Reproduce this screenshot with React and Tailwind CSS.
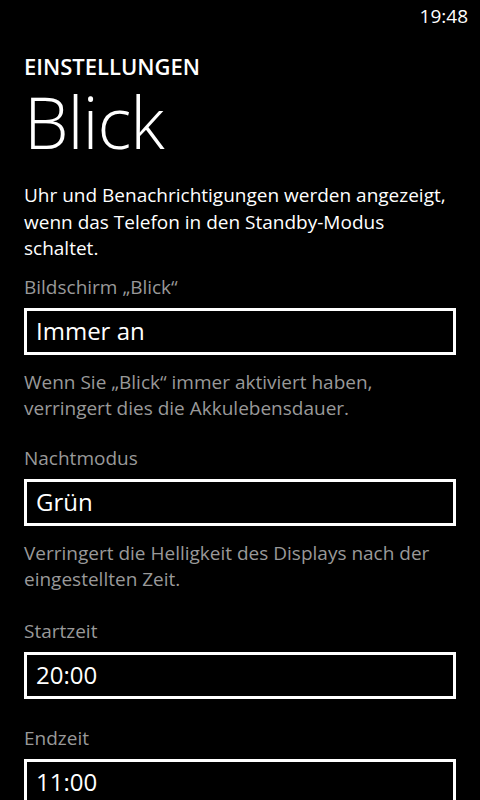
import React from "react";

const font = { fontFamily: '"Open Sans", "Noto Sans", sans-serif' };

function Box({ value }) {
  return (
    <div className="h-[47px] border-[3px] border-white flex items-center px-[9px] text-[24px] leading-none text-white">
      {value}
    </div>
  );
}

export default function App() {
  return (
    <div className="w-[480px] h-[800px] bg-black text-white overflow-hidden" style={font}>
      <div className="h-[32px] flex justify-end items-center pr-[12px] text-[19px] leading-none">19:48</div>
      <div className="px-[24px]">
        <div className="mt-[22px] text-[22px] font-semibold leading-[24px]">EINSTELLUNGEN</div>
        <div className="mt-[8px] text-[71px] font-light leading-[72px] tracking-[-1px]">Blick</div>
        <p className="mt-[24px] text-[19px] leading-[26.5px]">
          Uhr und Benachrichtigungen werden angezeigt, wenn das Telefon in den Standby-Modus schaltet.
        </p>
        <div className="mt-[12px] text-[19px] leading-[26px] text-[#999999]">Bildschirm „Blick“</div>
        <div className="mt-[8px]"><Box value="Immer an" /></div>
        <p className="mt-[14px] text-[19px] leading-[26px] text-[#999999]">
          Wenn Sie „Blick“ immer aktiviert haben, verringert dies die Akkulebensdauer.
        </p>
        <div className="mt-[24px] text-[19px] leading-[26px] text-[#999999]">Nachtmodus</div>
        <div className="mt-[8px]"><Box value="Grün" /></div>
        <p className="mt-[14px] text-[19px] leading-[26px] text-[#999999]">
          Verringert die Helligkeit des Displays nach der eingestellten Zeit.
        </p>
        <div className="mt-[26px] text-[19px] leading-[26px] text-[#999999]">Startzeit</div>
        <div className="mt-[8px]"><Box value="20:00" /></div>
        <div className="mt-[26px] text-[19px] leading-[26px] text-[#999999]">Endzeit</div>
        <div className="mt-[8px]"><Box value="11:00" /></div>
      </div>
    </div>
  );
}
